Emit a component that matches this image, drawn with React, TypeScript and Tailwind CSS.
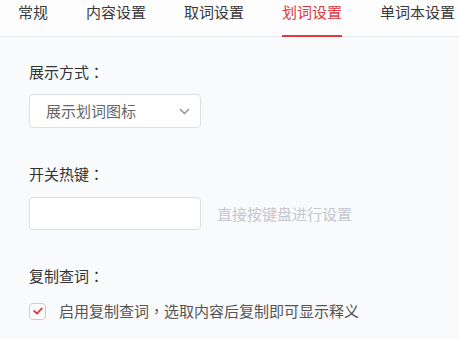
import { useState } from "react";

const TABS = ["常规", "内容设置", "取词设置", "划词设置", "单词本设置"];
const FONT = "font-['Microsoft_YaHei','Noto_Sans_CJK_SC',sans-serif]";
// centred full-width punctuation, as in the screenshot
const PUNCT = "font-['Noto_Sans_CJK_TC',sans-serif]";

export default function App() {
  const [active] = useState("划词设置");
  const [copyLookup, setCopyLookup] = useState(true);

  return (
    <div className={`w-[459px] h-[339px] overflow-hidden bg-[#f9fafc] text-[15px] leading-[20px] ${FONT}`}>
      {/* Tabs */}
      <div className="h-[37px] flex gap-[38px] pl-[18px] bg-[#fdfdfd] border-b border-[#e6e8ec] whitespace-nowrap">
        {TABS.map((t) => (
          <div
            key={t}
            className={`relative pt-[2px] ${t === active ? "text-[#dd3b40]" : "text-[#3a3a3a]"}`}
          >
            {t}
            {t === active && (
              <div className="absolute left-0 right-0 -bottom-px h-[2px] bg-[#dd3b40]" />
            )}
          </div>
        ))}
      </div>

      <div className="pl-[29px] flex flex-col items-start text-[#333]">
        {/* 展示方式 */}
        <div className="mt-[25px]">展示方式<span className={PUNCT}>：</span></div>
        <div className="mt-[12px] w-[172px] h-[34px] bg-white border border-[#dcdfe6] rounded-[4px] flex items-center pl-[16px] pr-[10px]">
          <span className="text-[#666]">展示划词图标</span>
          <svg className="ml-auto" width="11" height="7" viewBox="0 0 11 7">
            <polyline points="1,1 5.5,5.5 10,1" fill="none" stroke="#8a8f99" strokeWidth="1.4" />
          </svg>
        </div>

        {/* 开关热键 */}
        <div className="mt-[36px]">开关热键<span className={PUNCT}>：</span></div>
        <div className="mt-[13px] flex items-center gap-[16px]">
          <div className="w-[172px] h-[33px] bg-white border border-[#dcdfe6] rounded-[4px]" />
          <span className="text-[#c4c7cd]">直接按键盘进行设置</span>
        </div>

        {/* 复制查词 */}
        <div className="mt-[36px]">复制查词<span className={PUNCT}>：</span></div>
        <div className="mt-[15px] flex items-center gap-[13px] cursor-pointer" onClick={() => setCopyLookup((v) => !v)}>
          <div className="w-[17px] h-[17px] bg-white border border-[#c9ccd2] rounded-[4px] flex items-center justify-center">
            {copyLookup && (
              <svg width="10" height="8" viewBox="0 0 10 8">
                <polyline points="1.2,4 4,6.6 8.8,1.4" fill="none" stroke="#dd3b40" strokeWidth="1.8" strokeLinecap="round" strokeLinejoin="round" />
              </svg>
            )}
          </div>
          <span className="text-[#555]">
            启用复制查词<span className={PUNCT}>，</span>选取内容后复制即可显示释义
          </span>
        </div>
      </div>
    </div>
  );
}
